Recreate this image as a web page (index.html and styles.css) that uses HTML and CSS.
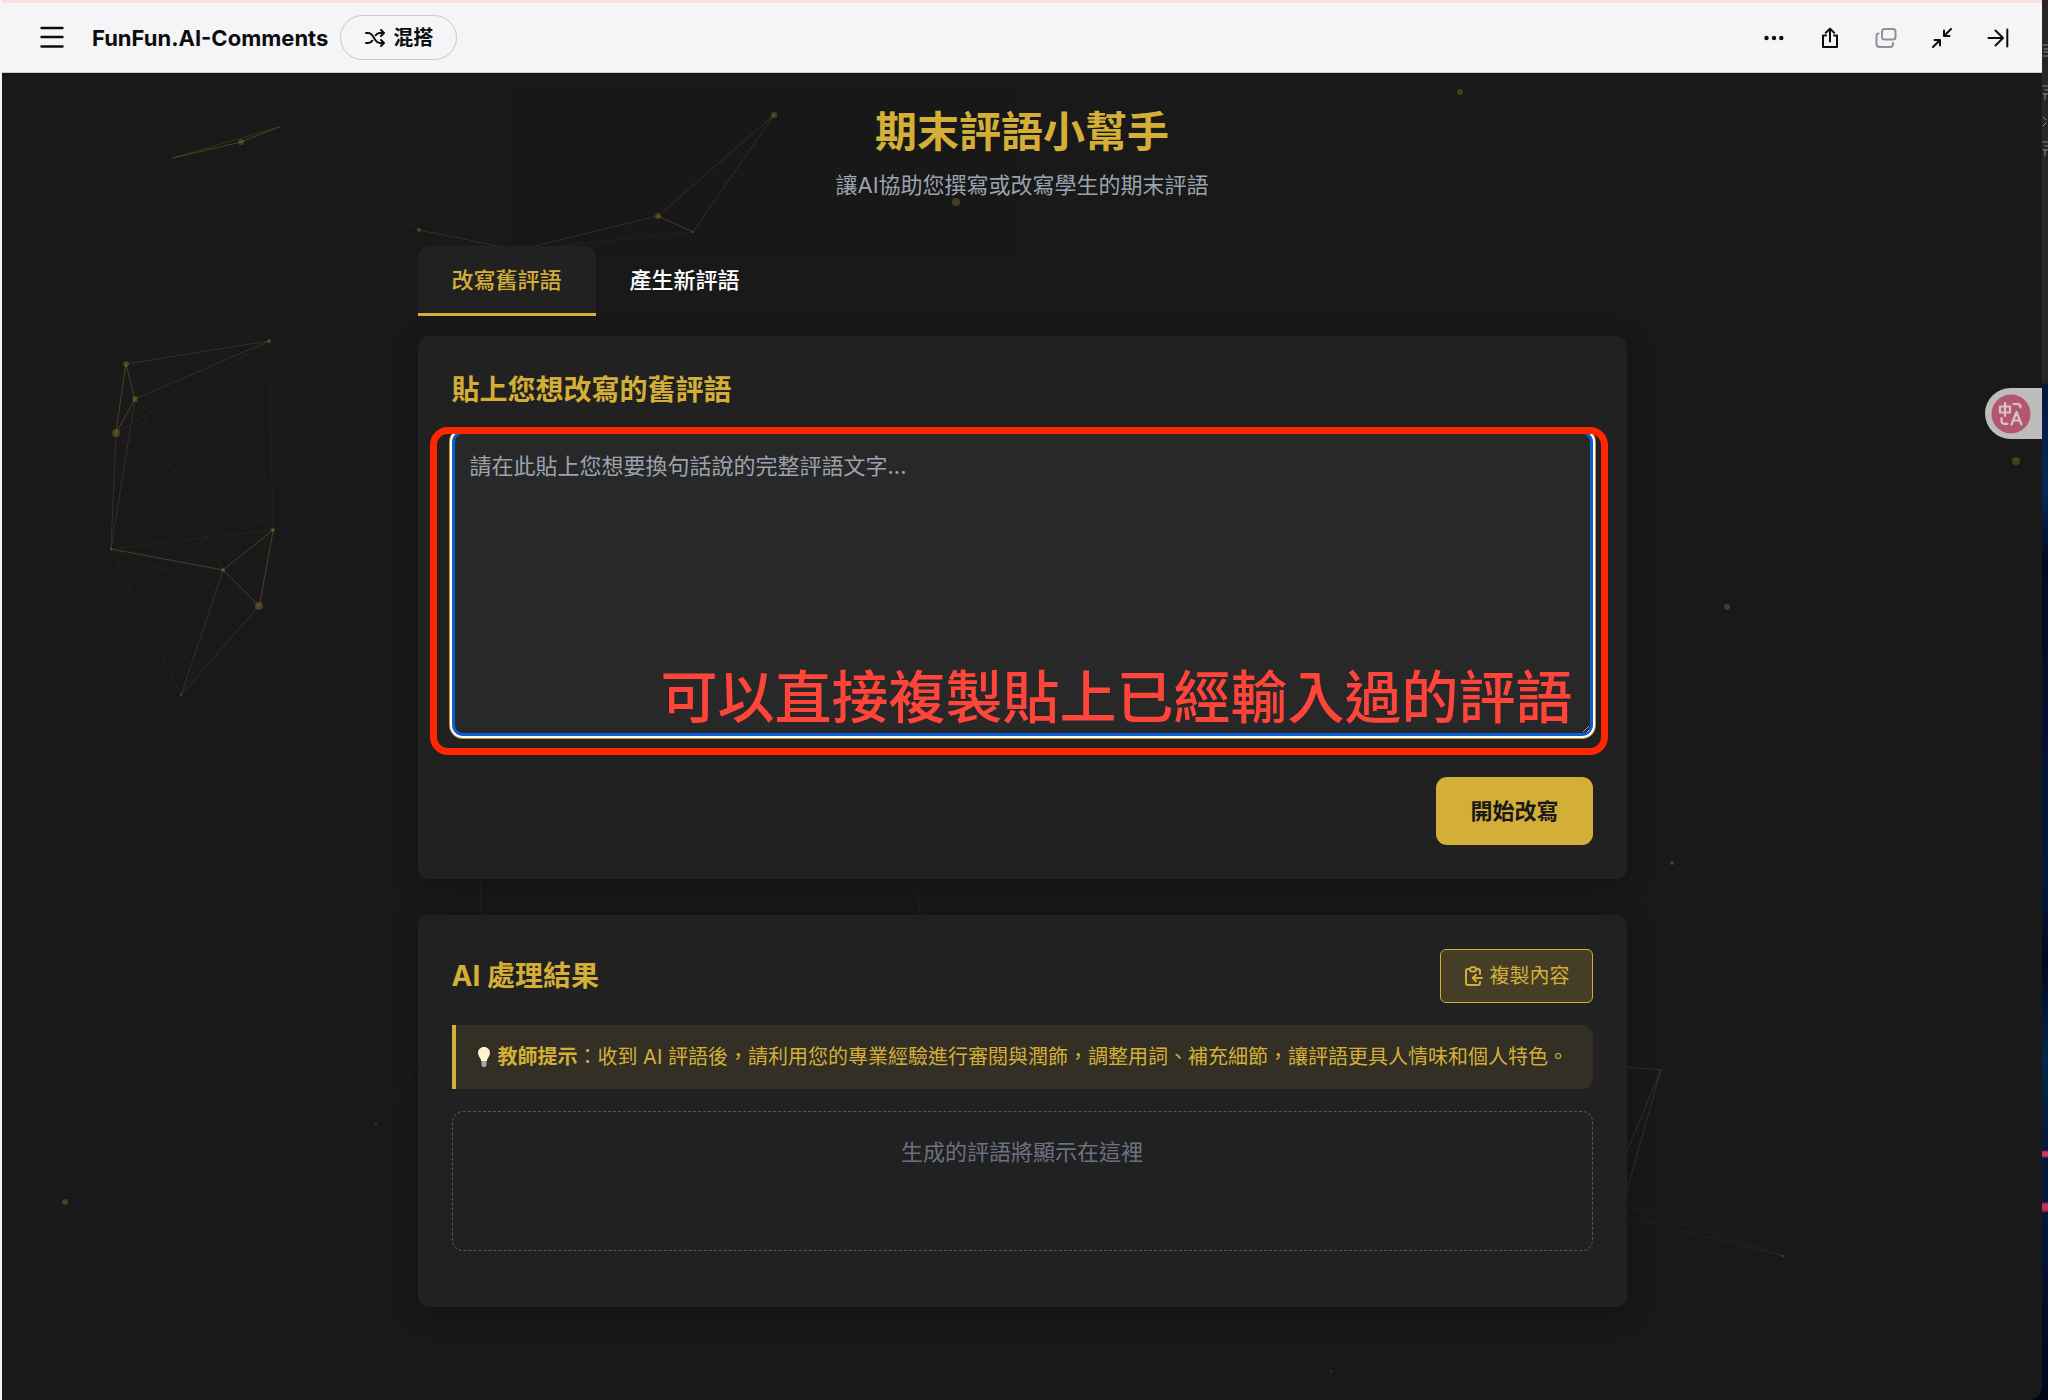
FILE: index.html
```html
<!DOCTYPE html>
<html lang="zh-Hant">
<head>
    <meta charset="utf-8">
    <meta name="viewport" content="width=device-width, initial-scale=1">
    <title>期末評語小幫手</title>
    <link rel="stylesheet" href="styles.css">
</head>
<body>

<div class="desktop">
    <div class="window">

        <header class="topbar">
            <button type="button" class="icon-btn menu-btn" aria-label="選單">
                <svg width="24" height="24" viewBox="0 0 24 24"><path d="M1.500 2h21M1.500 11h21M1.500 20.500h21" stroke-width="2.400"/></svg>
            </button>
            <span class="app-name">FunFun.AI-Comments</span>
            <button type="button" class="remix-btn">
                <svg width="20" height="20" viewBox="0 0 20 20"><path d="M1 5h2.500c1.800 0 2.800.9 3.800 2.300l3.400 5.200c1 1.500 2 2.500 4 2.500H19M1 15h2.500c1.800 0 2.800-.9 3.800-2.300M10.700 7.300C11.700 5.800 12.700 5 14.700 5H19M16 2l3 3-3 3M16 12l3 3-3 3" stroke-width="2"/></svg>
                混搭
            </button>
            <nav class="topbar-actions">
                <button type="button" class="icon-btn" aria-label="更多">
                    <svg width="24" height="24" viewBox="0 0 24 24"><g class="solid"><circle cx="4.500" cy="12" r="2.200"/><circle cx="12" cy="12" r="2.200"/><circle cx="19.300" cy="12" r="2.200"/></g></svg>
                </button>
                <button type="button" class="icon-btn" aria-label="分享">
                    <svg width="24" height="24" viewBox="0 0 24 24"><path d="M8 9.500H5V21h14V9.500h-3M12 15.500V3M7.800 6.800L12 2.600l4.200 4.200" stroke-width="2"/></svg>
                </button>
                <button type="button" class="icon-btn is-muted" aria-label="複製視窗">
                    <svg width="24" height="24" viewBox="0 0 24 24"><rect x="8" y="3" width="13.500" height="10.500" rx="2.500" stroke-width="2"/><path d="M4.500 7.500C3 7.500 2.500 9 2.500 10.500V18c0 2 1 3 3 3h10.500c2 0 3-1 3-3v-1" stroke-width="2"/></svg>
                </button>
                <button type="button" class="icon-btn" aria-label="縮小">
                    <svg width="24" height="24" viewBox="0 0 24 24"><path d="M21 3l-7 7M14 4.500V10h5.500M3 21l7-7M4.500 14H10v5.500" stroke-width="2"/></svg>
                </button>
                <button type="button" class="icon-btn" aria-label="收合">
                    <svg width="24" height="24" viewBox="0 0 24 24"><path d="M2.500 12H17M9.500 4.500L17 12l-7.500 7.500M21.300 3.500v17" stroke-width="2"/></svg>
                </button>
            </nav>
        </header>

        <div class="page">
            <!-- 背景粒子連線 -->
            <svg class="particles" aria-hidden="true">
                <g class="line-strong">
                    <path d="M171 85L239 69 277 54M124 291l9 35-19 34zM271 457l-50 40 36 36zM656 143l35 16M109 476l112 21"/>
                </g>
                <g class="line-mid">
                    <path d="M171 85L277 54M109 476l5-116M109 476l24-150M179 622l42-125M179 622l78-89M124 291l143-23M133 326l134-58M516 177L417 157M516 177l140-34M1625 994l34 3-34 81M1659 997l-34 120M772 42L656 143M772 42l-81 117"/>
                </g>
                <g class="line-soft">
                    <path d="M277 54l140 103M239 69l178 88M417 157L267 268l4 189M114 360l153-92M133 326l138 131M133 326l88 171M114 360l107 137M114 360l157 97M109 476l162-19M109 476l148 57M109 476l70 146M271 457l-92 165M516 177l175-18M1625 1133l156 50M1625 1143l156 40M374 1051l42-60M479 800v50M914 800l5 50"/>
                </g>
                <g class="dots">
                    <circle cx="239" cy="69" r="3"/><circle cx="417" cy="157" r="2"/><circle cx="267" cy="268" r="2"/>
                    <circle cx="124" cy="291" r="3"/><circle cx="133" cy="326" r="3"/><circle cx="114" cy="360" r="4"/>
                    <circle cx="109" cy="476" r="1"/><circle cx="271" cy="457" r="2"/><circle cx="221" cy="497" r="2"/>
                    <circle cx="257" cy="533" r="4"/><circle cx="179" cy="622" r="1"/><circle cx="772" cy="42" r="3"/>
                    <circle cx="656" cy="143" r="3"/><circle cx="691" cy="159" r="1"/><circle cx="954" cy="129" r="4"/>
                    <circle cx="1458" cy="19" r="3"/><circle cx="2014" cy="388" r="4"/><circle cx="1725" cy="534" r="3"/>
                    <circle cx="1670" cy="790" r="2"/><circle cx="63" cy="1129" r="3"/><circle cx="374" cy="1051" r="1"/>
                    <circle cx="1329" cy="1298" r="1"/><circle cx="1781" cy="1183" r="1"/>
                </g>
            </svg>

            <main class="container">
                <h1 class="title">期末評語小幫手</h1>
                <p class="subtitle">讓AI協助您撰寫或改寫學生的期末評語</p>

                <div class="tabs" role="tablist">
                    <button type="button" role="tab" aria-selected="true" class="tab active">改寫舊評語</button>
                    <button type="button" role="tab" aria-selected="false" class="tab">產生新評語</button>
                </div>

                <section class="card">
                    <h2 class="card-title"><label for="oldComment">貼上您想改寫的舊評語</label></h2>
                    <div class="field">
                        <textarea id="oldComment" class="comment-input" placeholder="請在此貼上您想要換句話說的完整評語文字..."></textarea>
                        <div class="mark"></div>
                        <div class="mark-text">可以直接複製貼上已經輸入過的評語</div>
                    </div>
                    <div class="card-actions">
                        <button type="button" class="primary-btn">開始改寫</button>
                    </div>
                </section>

                <section class="card result-card">
                    <div class="card-head">
                        <h2 class="card-title">AI 處理結果</h2>
                        <button type="button" class="copy-btn">
                            <svg width="20" height="20" viewBox="0 0 20 20"><path d="M7 3H5C3.800 3 3 3.800 3 5v12c0 1.200.8 2 2 2h10c1.200 0 2-.8 2-2v-1M13 3h2c1.200 0 2 .8 2 2v3M19 12H10M13 8.800L9.800 12l3.200 3.200" stroke-width="2"/><rect x="7" y="1.200" width="6" height="4.200" rx="2" stroke-width="2"/></svg>
                            複製內容
                        </button>
                    </div>
                    <div class="tip">
                        <svg class="bulb" width="16" height="22" viewBox="0 0 16 22" aria-hidden="true"><path d="M8 1C4.500 1 2 3.600 2 7c0 3.200 3 5.500 3.400 8.500h5.200C11 12.500 14 10.200 14 7c0-3.400-2.500-6-6-6z" fill="#fff3cf"/><path d="M5.500 15.500h5v3.500L9.500 21h-3l-1-2z" fill="#a9a9a9"/></svg>
                        <p class="tip-text"><strong>教師提示</strong>：收到 AI 評語後，請利用您的專業經驗進行審閱與潤飾，調整用詞、補充細節，讓評語更具人情味和個人特色。</p>
                    </div>
                    <div class="result">生成的評語將顯示在這裡</div>
                </section>
            </main>

            <!-- 翻譯浮動按鈕 -->
            <button type="button" class="translate-btn" aria-label="翻譯">
                <svg width="40" height="40" viewBox="0 0 40 40"><circle cx="20" cy="20" r="19.500" fill="#b5566f"/><path d="M9 12.500h10v6H9zM14 9v13M22.500 10h4c2 0 3 1 3 3.500M10.500 24v2.500c0 2 1 3.300 3 3.300h3M20.500 30.500L25.500 18l5 12.500M22.300 26.500h6.500" stroke="#d2c4c8" stroke-width="2.200"/></svg>
            </button>
        </div>
    </div>

    <!-- 視窗後方露出的桌面 -->
    <div class="behind">
        <svg width="6" height="170" viewBox="0 0 6 170" aria-hidden="true"><path d="M1 45h5M2 49h4M2 52h4M1 56h5M1 86h5M3 90h3M1 94h5M3 94v6M1 117l3 3M1 126l3-3M1 142h5M3 146h3M1 150h5M3 150v6" stroke="#8d878a"/></svg>
    </div>
</div>

</body>
</html>
```
FILE: styles.css
```css
*{
    box-sizing: border-box;
}
body{
    margin: 0;
    font-family: Inter, "Noto Sans CJK TC", sans-serif;
    font-size: 22px;line-height: 34px;
    background: #f4f4f6;color: #fff;
}
h1,h2,p{margin: 0;}
button,textarea{
    font: inherit;
}
button{
    margin: 0;padding: 0;border: none;background: none;
    cursor: pointer;
}
svg{
    fill: none;stroke: none;
    display: block;flex: none;
    stroke-linecap: round;stroke-linejoin: round;
}

/*視窗外框*/
.desktop{
    display: flex;min-height: 100vh;
    background: #f4f4f6;
}
.window{
    flex: 1;min-width: 0;
    display: flex;flex-direction: column;
    margin-left: 2px;
    background: #01051a;
}
.behind{
    width: 6px;
    background: linear-gradient(#2a2327 0, #2a2327 383px, #04163c 384px, #05285c 490px, #020a22 560px, #04183e 880px, #020920 960px, #03254c 1060px, #04183a 1150px, #c43a58 1152px, #c43a58 1156px, #04183a 1158px, #04183a 1202px, #c42f4c 1204px, #c42f4c 1210px, #04183a 1213px, #01051a 1400px);
}

/*頂部工具列*/
.topbar{
    display: flex;align-items: center;
    height: 73px;padding: 0 32px 0 38px;
    border-top: 3px solid #fbe1e0;border-bottom: 1px solid #c9c9cc;
    background: #f5f5f8;color: #0c0d0e;
}
.icon-btn{
    color: inherit;
}
.icon-btn svg,.remix-btn svg,.copy-btn svg{
    stroke: currentColor;
}
.icon-btn .solid{
    fill: currentColor;stroke: none;
}
.is-muted{
    color: #919195;
}
.menu-btn{
    margin-right: 28px;
}
.app-name{
    font-weight: 700;white-space: nowrap;
}
.remix-btn{
    display: flex;align-items: center;gap: 8px;
    height: 45px;padding: 0 23px 0 24px;margin-left: 12px;
    border: 1px solid #c9c9cc;border-radius: 23px;
    font-size: 20px;font-weight: 700;color: inherit;white-space: nowrap;
}
.topbar-actions{
    display: flex;gap: 32px;
    margin-left: auto;
}

/*主畫面*/
.page{
    flex: 1;position: relative;overflow: hidden;
    background: #191919;
    border-bottom-right-radius: 14px;
}
.particles{
    position: absolute;top: 0;left: 0;
    width: 100%;height: 100%;
    stroke: #d4af37;
}
.line-strong{opacity: 0.26;}
.line-mid{opacity: 0.15;}
.line-soft{opacity: 0.06;}
.dots{
    fill: #d4af37;stroke: none;opacity: 0.25;
}
.container{
    position: relative;
    max-width: 1209px;margin: 0 auto;padding: 36px 0 90px;
}
.title{
    font-size: 42px;line-height: 46px;font-weight: 700;
    text-align: center;color: #d4af37;
}
.subtitle{
    margin-top: 13px;
    text-align: center;color: #9ca3af;
}

/*分頁標籤*/
.tabs{
    display: flex;
    margin: 44px 0 20px;
}
.tab{
    padding: 17px 34px 16px;
    border-bottom: 3px solid transparent;border-radius: 11px 11px 0 0;
    font-weight: 500;color: #fff;
}
.tab.active{
    background: #212121;
    border-bottom-color: #d4af37;color: #d4af37;
}

/*卡片*/
.card{
    padding: 34px;
    border-radius: 11px;background: #212121;
    box-shadow: 0 6px 28px rgba(0,0,0,0.3);
}
.card-title{
    font-size: 28px;line-height: 40px;font-weight: 700;
    color: #d4af37;
}
.field{
    position: relative;
    margin-top: 21px;
}
.comment-input{
    display: block;
    width: 100%;height: 305px;padding: 15px;
    border: 3px solid #0a5fd8;border-radius: 11px;
    box-shadow: 0 0 0 2px #fff, 0 0 0 3px #b8962e;
    background: #282828;color: #fff;
    outline: none;resize: vertical;
    color-scheme: dark;
}
.comment-input::placeholder{
    color: #9ca3af;opacity: 1;
}

/*紅框標註*/
.mark{
    position: absolute;top: -4px;right: -15px;bottom: -19px;left: -22px;
    border: 7px solid #ff2600;border-radius: 18px;
    pointer-events: none;
}
.mark-text{
    position: absolute;right: 20px;bottom: 6px;
    font-size: 57px;line-height: 64px;font-weight: 500;
    white-space: nowrap;color: #ff453a;
    pointer-events: none;
}
.card-actions{
    display: flex;justify-content: flex-end;
    margin-top: 41px;
}
.primary-btn{
    padding: 17px 34px;
    border-radius: 11px;background: #d4af37;
    font-weight: 700;color: #191919;
}

/*處理結果*/
.result-card{
    margin-top: 36px;
}
.card-head{
    display: flex;align-items: center;justify-content: space-between;
}
.copy-btn{
    display: flex;align-items: center;gap: 7px;
    height: 54px;padding: 0 22px;
    border: 1px solid #d4af37;border-radius: 6px;
    background: #453d26;
    font-size: 20px;color: #d4af37;
}
.tip{
    display: flex;align-items: center;gap: 6px;
    margin: 22px 0;padding: 15px 20px;
    border-left: 4px solid #d4af37;border-radius: 0 11px 11px 0;
    background: #332f25;
}
.tip-text{
    font-size: 20px;color: #d4af37;
}
.result{
    min-height: 140px;padding: 23px;margin-bottom: 22px;
    border: 1px dashed #57575a;border-radius: 11px;
    text-align: center;color: #6b7280;
}

/*翻譯按鈕*/
.translate-btn{
    position: absolute;top: 315px;right: 0;
    width: 57px;height: 51px;padding-left: 6px;
    border-radius: 26px 0 0 26px;background: #bdbdbd;
}
```
